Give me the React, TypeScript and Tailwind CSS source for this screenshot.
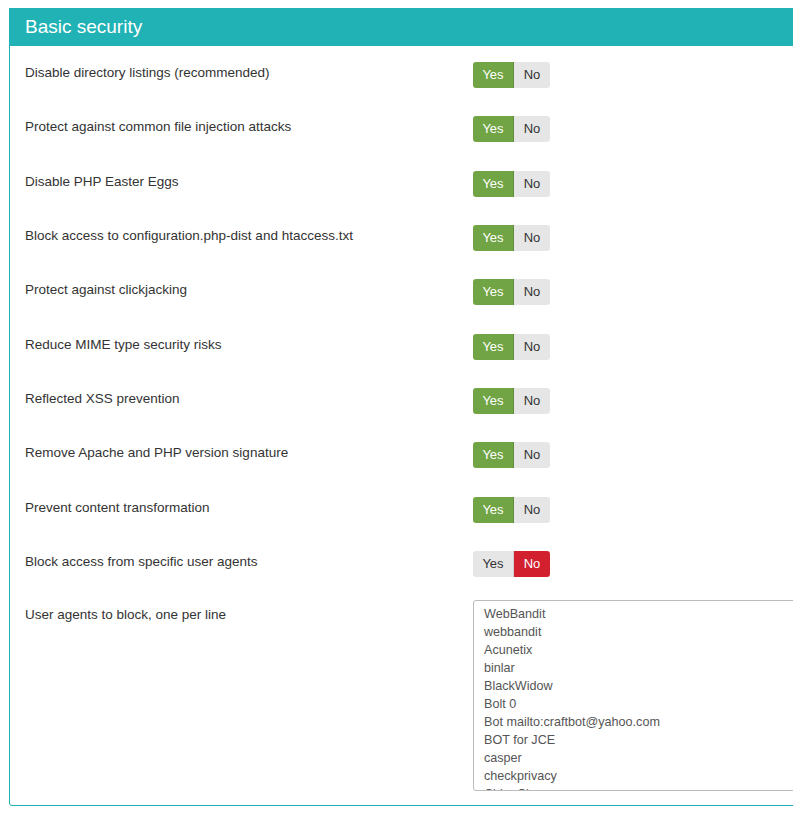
import React from "react";

const rows: { label: string; yes: boolean }[] = [
  { label: "Disable directory listings (recommended)", yes: true },
  { label: "Protect against common file injection attacks", yes: true },
  { label: "Disable PHP Easter Eggs", yes: true },
  { label: "Block access to configuration.php-dist and htaccess.txt", yes: true },
  { label: "Protect against clickjacking", yes: true },
  { label: "Reduce MIME type security risks", yes: true },
  { label: "Reflected XSS prevention", yes: true },
  { label: "Remove Apache and PHP version signature", yes: true },
  { label: "Prevent content transformation", yes: true },
  { label: "Block access from specific user agents", yes: false },
];

const agents = [
  "WebBandit",
  "webbandit",
  "Acunetix",
  "binlar",
  "BlackWidow",
  "Bolt 0",
  "Bot mailto:craftbot@yahoo.com",
  "BOT for JCE",
  "casper",
  "checkprivacy",
  "ChinaClaw",
  "clshttp",
];

function Toggle({ yes }: { yes: boolean }) {
  return (
    <div className="flex h-[26px] w-[77px] shrink-0 overflow-hidden rounded-[3px] text-[13px] leading-[26px]">
      <div
        className={
          yes
            ? "w-[41px] bg-[#70a444] text-center text-white border-r border-[#5f8d39]"
            : "w-[41px] bg-[#e6e6e6] text-center text-[#333] border-r border-[#cfcfcf]"
        }
      >
        Yes
      </div>
      <div
        className={
          yes
            ? "w-[36px] bg-[#e6e6e6] text-center text-[#333]"
            : "w-[36px] bg-[#d2202f] text-center text-white"
        }
      >
        No
      </div>
    </div>
  );
}

export default function App() {
  return (
    <div
      className="w-[793px] h-[814px] overflow-hidden bg-white"
      style={{ fontFamily: '"Liberation Sans", Arial, sans-serif' }}
    >
      <div className="ml-[9px] mt-[8px] w-[820px] rounded-[3px] border border-solid border-[#20b2b4]">
        <div className="-mx-px -mt-px h-[38px] bg-[#20b2b4] px-[16px] text-[19px] leading-[37px] text-white">
          Basic security
        </div>
        <div className="px-[15px] pb-[14px] pt-[16px]">
          {rows.map((r, i) => (
            <div key={i} className="flex h-[54.33px]">
              <div className="w-[448px] shrink-0 pt-[2px] text-[13.5px] leading-[18px] text-[#333]">
                {r.label}
              </div>
              <Toggle yes={r.yes} />
            </div>
          ))}
          <div className="-mt-[5px] flex">
            <div className="w-[448px] shrink-0 pt-[6px] text-[13.5px] leading-[18px] text-[#333]">
              User agents to block, one per line
            </div>
            <div className="h-[191px] w-[360px] shrink-0 overflow-hidden rounded-[3px] border border-[#bbb] pl-[10px] pt-[4px] text-[12.6px] leading-[18px] text-[#555]">
              {agents.map((a, i) => (
                <div key={i}>{a}</div>
              ))}
            </div>
          </div>
        </div>
      </div>
    </div>
  );
}
